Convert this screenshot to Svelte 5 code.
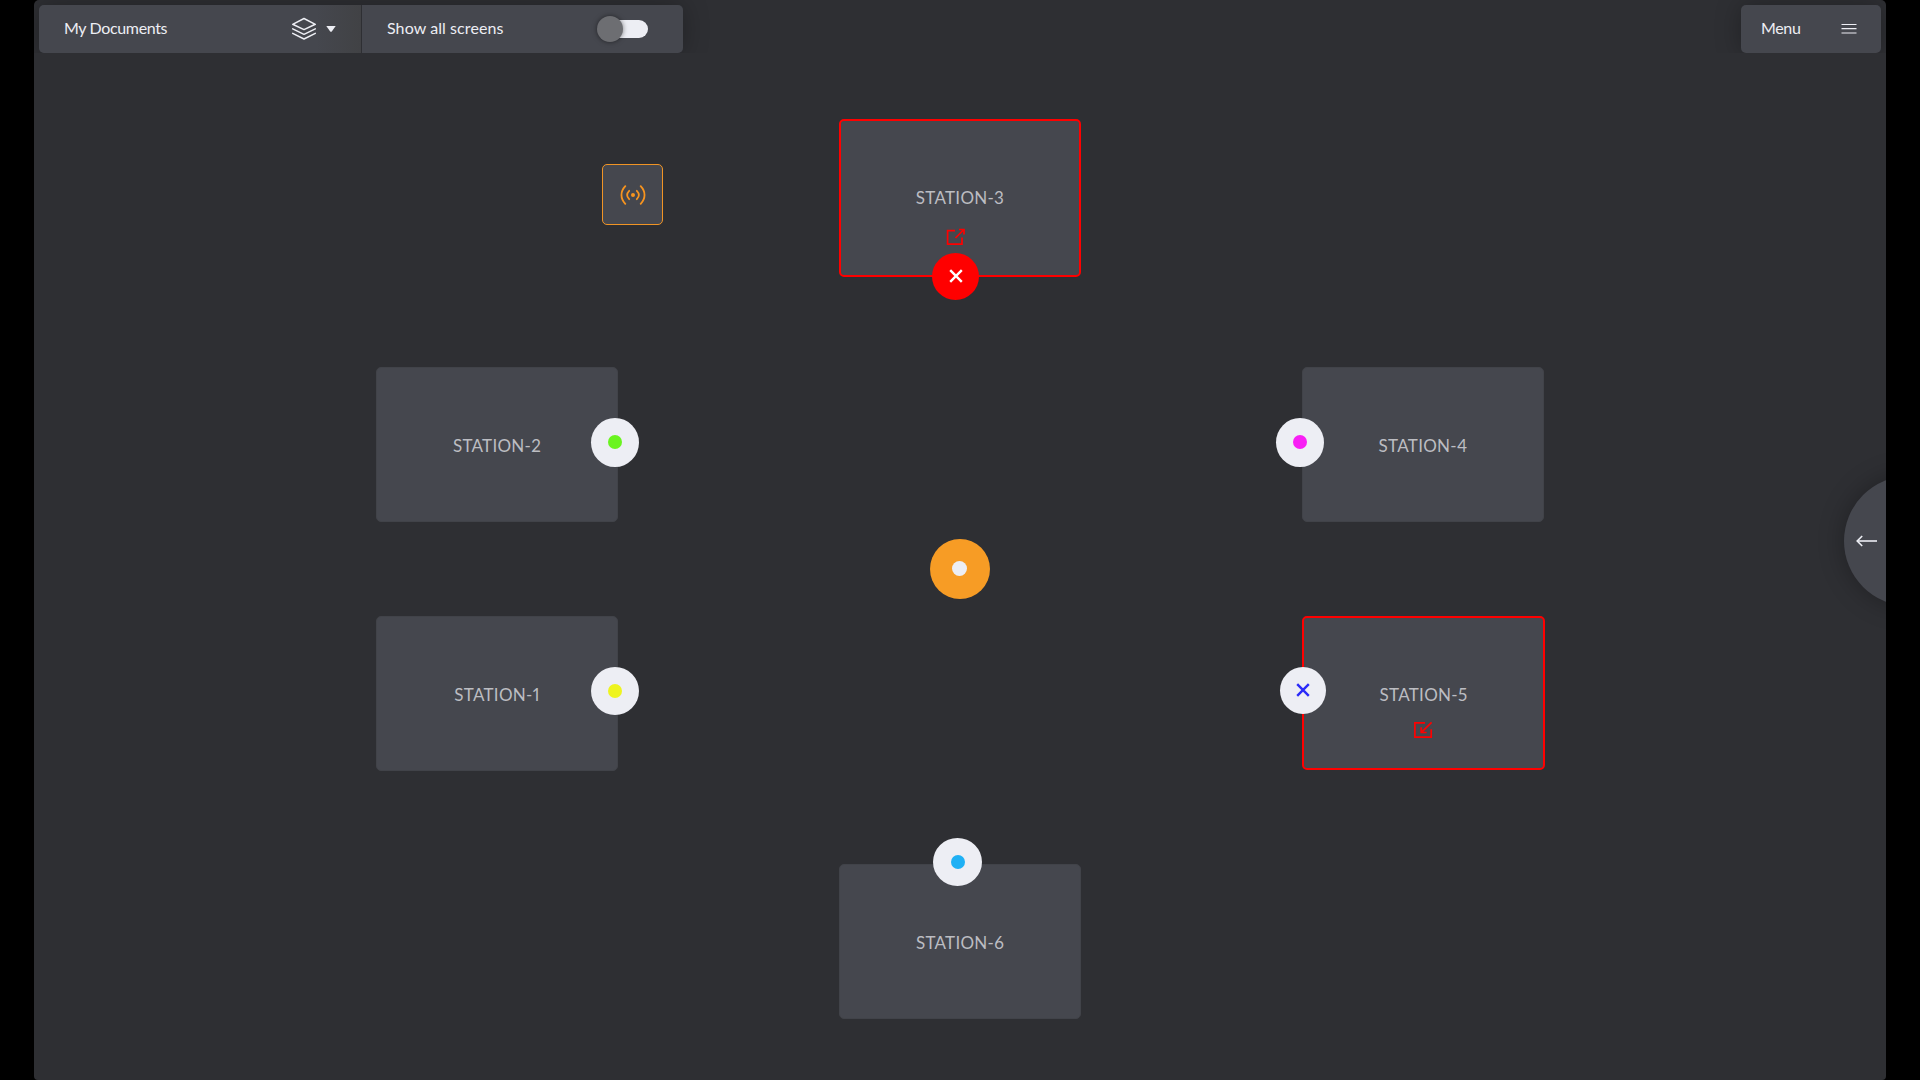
<script>
  /*
    Room board: stations around a table, each with a connector node.
    Stations and nodes sit on a free canvas, coordinates are board pixels.
  */
  const stations = [
    { id: 1, x: 376, y: 616, w: 242, h: 155 },
    { id: 2, x: 376, y: 367, w: 242, h: 155 },
    { id: 3, x: 839, y: 119, w: 242, h: 158, active: true },
    { id: 4, x: 1302, y: 367, w: 242, h: 155 },
    { id: 5, x: 1302, y: 616, w: 243, h: 154, active: true },
    { id: 6, x: 839, y: 864, w: 242, h: 155 },
  ];

  const nodes = [
    { x: 591, y: 667, w: 48, h: 48, dot: "#eef41f" },
    { x: 591, y: 418, w: 48, h: 49, dot: "#6af41f" },
    { x: 932, y: 253, w: 47, h: 47, cross: "#ffffff", fill: "#ff0000" },
    { x: 1276, y: 418, w: 48, h: 49, dot: "#f81ff4" },
    { x: 1280, y: 667, w: 46, h: 47, cross: "#2a2af8" },
    { x: 933, y: 838, w: 49, h: 48, dot: "#1fb0f4" },
  ];

  let showAll = $state(false);
</script>

<div class="screen">
  <header class="topbar">
    <div class="group">
      <button class="cell docs">
        <span class="label tight docs-label">My Documents</span>
        <svg class="layers" width="26" height="24" viewBox="0 0 26 24">
          <path d="M13 1.5 L24.3 7.3 L13 12.6 L1.7 7.3 Z" />
          <path d="M1.7 11.8 L13 17.3 L24.3 11.8" />
          <path d="M1.7 16.4 L13 22 L24.3 16.4" />
        </svg>
        <svg class="caret" width="10" height="6" viewBox="0 0 10 6">
          <path d="M0.3 0 H9.7 L5.8 5.4 Q5 6.3 4.2 5.4 Z" />
        </svg>
      </button>
      <div class="cell all">
        <span class="label">Show all screens</span>
        <button
          class="toggle"
          class:on={showAll}
          aria-label="Show all screens"
          onclick={() => (showAll = !showAll)}
        >
          <span class="knob"></span>
        </button>
      </div>
    </div>
    <button class="cell menu">
      <span class="label tight">Menu</span>
      <svg width="16" height="12" viewBox="0 0 16 12">
        <path d="M0.5 1.5 H15.5 M0.5 5.7 H15.5 M0.5 10 H15.5" />
      </svg>
    </button>
  </header>

  <main class="board">
    <button class="cast" aria-label="Broadcast">
      <svg width="26" height="20" viewBox="0 0 26 20">
        <circle cx="13" cy="10" r="2" />
        <path d="M9.2 5.8 Q5 10 9.2 14.2 M16.8 5.8 Q21 10 16.8 14.2" />
        <path d="M5.3 1.2 C0.2 6.5 0.2 13.5 5.3 18.8 M20.7 1.2 C25.8 6.5 25.8 13.5 20.7 18.8" />
      </svg>
    </button>

    {#each stations as s (s.id)}
      <section
        class="station"
        class:active={s.active}
        style={`left:${s.x}px; top:${s.y}px; width:${s.w}px; height:${s.h}px;`}
      >
        <span class="name">STATION-{s.id}</span>
      </section>
    {/each}

    <!-- outgoing share -->
    <svg class="share out" width="20" height="18" viewBox="0 0 20 18">
      <path d="M10 2.6 H2.6 V16.2 H17 V9.5" />
      <path d="M10.5 10 L18.4 2 M14 1.5 H19 V6.6" />
    </svg>

    <!-- incoming share -->
    <svg class="share in" width="20" height="18" viewBox="0 0 20 18">
      <path d="M12 1.9 H1.9 V16.1 H18.2 V8.2" />
      <path d="M18.6 1.3 L8.4 11.3 M8.2 6.2 V11.5 H13.6" />
    </svg>

    {#each nodes as n}
      <button
        class="node"
        aria-label="Connector"
        style={`left:${n.x}px; top:${n.y}px; width:${n.w}px; height:${n.h}px; background:${n.fill ?? "#edeef4"};`}
      >
        {#if n.dot}
          <span class="dot" style={`background:${n.dot};`}></span>
        {:else}
          <svg width="14" height="14" viewBox="0 0 14 14">
            <path d="M1.2 1.2 L12.8 12.8 M12.8 1.2 L1.2 12.8" stroke={n.cross} />
          </svg>
        {/if}
      </button>
    {/each}

    <button class="hub" aria-label="Table"><span class="dot"></span></button>

    <button class="drawer" aria-label="Open panel">
      <svg width="22" height="12" viewBox="0 0 22 12">
        <path d="M1.2 6 H21" />
        <path d="M6.2 1 L1.2 6 L6.2 11" />
      </svg>
    </button>
  </main>
</div>

<style>
  :global(body) {
    background: #000;
    overflow: hidden;
  }

  .screen {
    position: relative;
    width: 1852px;
    height: 1080px;
    margin: 0 auto;
    border-radius: 5px 5px 4px 4px;
    overflow: hidden;
    background: #2e2f33;
    font-family: Lato, "Liberation Sans", sans-serif;
  }

  button {
    border: 0;
    padding: 0;
    margin: 0;
    background: none;
    font: inherit;
    color: inherit;
  }
  svg {
    display: block;
    fill: none;
  }

  .topbar {
    display: flex;
    justify-content: space-between;
    height: 53px;
    box-sizing: border-box;
    padding: 5px 5px 0;
    /* keeps the panel shadows from falling onto the board */
    overflow: hidden;
  }
  .group {
    display: flex;
    gap: 1px;
    border-radius: 5px;
    box-shadow: 0 0 26px rgba(0, 0, 0, 0.28);
  }
  .cell {
    display: flex;
    align-items: center;
    height: 48px;
    box-sizing: border-box;
    background: #45474e;
    color: #edeef4;
  }
  .label {
    padding-bottom: 2px;
    font-size: 16px;
    line-height: 20px;
    letter-spacing: 0.08px;
    white-space: nowrap;
  }
  .label.tight {
    letter-spacing: -0.35px;
  }
  .docs {
    width: 322px;
    padding: 0 25px;
    border-radius: 5px 0 0 5px;
    background: linear-gradient(90deg, #45474e 86%, #414245 100%);
  }
  .docs-label {
    margin-right: auto;
  }
  .layers {
    stroke: #edeef4;
    stroke-width: 1.5;
    stroke-linejoin: round;
    stroke-linecap: round;
    margin-right: 9px;
  }
  .caret {
    fill: #edeef4;
  }
  .all {
    width: 321px;
    padding: 0 35px 0 25px;
    justify-content: space-between;
    border-radius: 0 5px 5px 0;
  }
  .toggle {
    display: flex;
    align-items: center;
    width: 50px;
    height: 18px;
    border-radius: 9px;
    background: #edeef4;
  }
  .knob {
    flex: none;
    width: 26px;
    height: 26px;
    margin-left: -1px;
    border-radius: 50%;
    background: #6d6e72;
    box-shadow: 0 0 5px rgba(0, 0, 0, 0.5);
  }
  .toggle.on .knob {
    margin-left: 25px;
  }
  .menu {
    width: 140px;
    padding: 0 24px 0 20px;
    justify-content: space-between;
    border-radius: 5px;
    box-shadow: 0 0 26px rgba(0, 0, 0, 0.28);
  }
  .menu svg {
    stroke: #edeef4;
    stroke-width: 1.2;
  }

  /* the board is measured from the left edge of the whole display */
  .board {
    position: absolute;
    inset: 0 0 0 -34px;
    pointer-events: none;
  }
  .board > * {
    position: absolute;
    box-sizing: border-box;
    pointer-events: auto;
  }

  .cast {
    left: 602px;
    top: 164px;
    width: 61px;
    height: 61px;
    border: 1px solid #f09425;
    border-radius: 5px;
    background: #45474e;
    display: flex;
    align-items: center;
    justify-content: center;
  }
  .cast svg {
    stroke: #f7941f;
    stroke-width: 1.8;
    stroke-linecap: round;
  }
  .cast circle {
    fill: #f7941f;
    stroke: none;
  }

  .station {
    display: flex;
    align-items: flex-start;
    justify-content: center;
    padding-top: 68px;
    border: 1px solid #414349;
    border-radius: 5px;
    background: #45474e;
  }
  .station.active {
    padding-top: 67px;
    border: 2px solid #ff0000;
  }
  .name {
    font-size: 17px;
    font-variant-numeric: proportional-nums;
    line-height: 20px;
    letter-spacing: 0.28px;
    color: #bcbdc2;
    white-space: nowrap;
  }

  .share {
    stroke: #ff0000;
    stroke-width: 1.7;
  }
  .out { left: 945px; top: 228px; }
  .in  { left: 1413px; top: 721px; }

  .node,
  .hub {
    display: flex;
    align-items: center;
    justify-content: center;
    border-radius: 50%;
  }
  .node svg {
    margin: 0 0 1px 0;
    stroke-width: 2.4;
  }
  .dot {
    width: 14px;
    height: 14px;
    margin-bottom: 1px;
    border-radius: 50%;
  }
  .hub {
    left: 930px;
    top: 539px;
    width: 60px;
    height: 60px;
    background: #f79c25;
  }
  .hub .dot {
    width: 15px;
    height: 15px;
    margin-right: 1px;
    background: #edeef4;
  }

  .drawer {
    left: 1844px;
    top: 476px;
    width: 130px;
    height: 130px;
    padding-left: 12px;
    border-radius: 50%;
    background: #45474e;
    box-shadow: 0 0 26px rgba(0, 0, 0, 0.3);
    display: flex;
    align-items: center;
  }
  .drawer svg {
    stroke: #edeef4;
    stroke-width: 1.6;
  }
</style>
